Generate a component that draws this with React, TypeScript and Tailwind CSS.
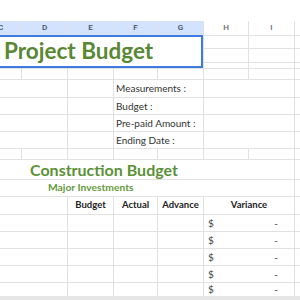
import React from "react";

const head = ["C", "D", "E", "F", "G", "H", "I", ""];

const Cell = ({ className = "", children }: { className?: string; children?: React.ReactNode }) => (
  <div className={`bg-white flex items-center overflow-hidden whitespace-nowrap ${className}`}>{children}</div>
);

const labels = ["Measurements :", "Budget :", "Pre-paid Amount :", "Ending Date :"];

export default function App() {
  return (
    <div className="w-[300px] h-[300px] overflow-hidden bg-white pt-[21px] font-['Lato',sans-serif] text-[#333]">
      <div className="grid grid-cols-[21px_45px_45px_43px_45px_44px_45px_1fr] grid-rows-[14px_12px_13px_5px_10px_17px_16px_16px_16px_10px_19px_16px_17px_16px_16px_16px_16px_13px] gap-px bg-[#e1e1e1]">
        {/* column headers */}
        {head.map((h, i) => (
          <div
            key={i}
            className={`flex items-center justify-center font-['Roboto',sans-serif] text-[8px] font-medium ${
              i < 5 ? "bg-[#d3e3fd] text-[#3c4a5e]" : "bg-white text-[#5f6368]"
            }`}
          >
            <span className={i === 0 ? "-ml-[20px]" : ""}>{h}</span>
          </div>
        ))}

        {/* title, selected */}
        <div className="col-span-5 row-span-3 bg-white border-2 border-l-0 border-[#3d7be0] -mt-px flex items-center pl-[4px]">
          <span className="text-[22.5px] font-bold text-[#588833] leading-none">Project Budget</span>
        </div>
        {[0, 1, 2].map((r) => (
          <React.Fragment key={r}>
            <Cell />
            <Cell />
            <Cell />
          </React.Fragment>
        ))}

        {/* spacer row */}
        {Array.from({ length: 8 }).map((_, i) => (
          <Cell key={i} />
        ))}

        {/* info rows */}
        {labels.map((l) => (
          <React.Fragment key={l}>
            <Cell className="col-span-2" />
            <Cell />
            <Cell className="col-span-2 pl-[2px] text-[10px]">{l}</Cell>
            <Cell className="col-span-2" />
            <Cell />
          </React.Fragment>
        ))}

        {/* spacer row */}
        {Array.from({ length: 8 }).map((_, i) => (
          <Cell key={"s" + i} />
        ))}

        <Cell className="col-span-7 pl-[30px] pt-[1px]">
          <span className="text-[16px] font-bold text-[#5b9137]">Construction Budget</span>
        </Cell>
        <Cell />

        <Cell className="col-span-7 pl-[48px]">
          <span className="text-[10.3px] font-bold text-[#649a3e]">Major Investments</span>
        </Cell>
        <Cell />

        {/* table header */}
        <Cell className="col-span-2" />
        {["Budget", "Actual", "Advance"].map((t) => (
          <Cell key={t} className="justify-center text-[9.5px] font-bold text-[#222]">
            {t}
          </Cell>
        ))}
        <Cell className="col-span-2 justify-center text-[9.5px] font-bold text-[#222]">Variance</Cell>
        <Cell />

        {/* data rows */}
        {[0, 1, 2, 3, 4].map((r) => (
          <React.Fragment key={"d" + r}>
            <Cell className="col-span-2" />
            <Cell />
            <Cell />
            <Cell />
            <Cell className="col-span-2 justify-between pl-[4px] pr-[16px] text-[10px] text-[#444]">
              <span>$</span>
              <span>-</span>
            </Cell>
            <Cell />
          </React.Fragment>
        ))}
      </div>
      <div className="h-[4px] bg-[#e6e6e6]" />
    </div>
  );
}
